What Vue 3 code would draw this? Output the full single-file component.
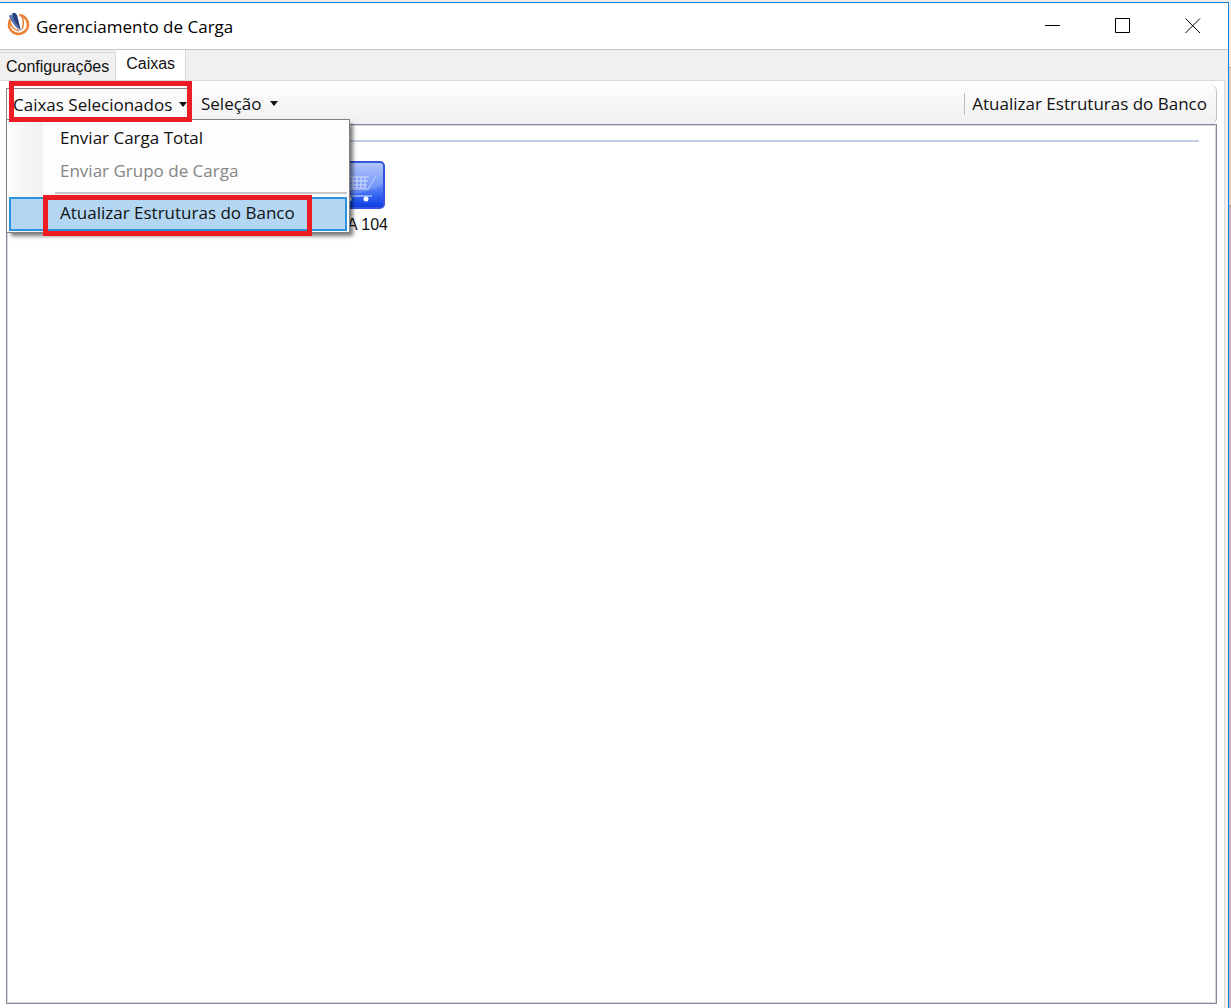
<script setup>
import { ref } from 'vue'

const tabs = ['Configurações', 'Caixas']
const activeTab = ref('Caixas')
const menuItems = [
  { label: 'Enviar Carga Total' },
  { label: 'Enviar Grupo de Carga', disabled: true },
  { separator: true },
  { label: 'Atualizar Estruturas do Banco', active: true, marked: true },
]
</script>

<template>
  <div class="desktop">
    <main class="window">
      <header class="titlebar">
        <svg class="logo" width="24" height="26" viewBox="0 0 24 26" aria-hidden="true">
          <circle cx="12.500" cy="13.500" r="9.500" fill="#fff" stroke="#ec8134" stroke-width="2.500" />
          <path d="M4 10Q5 18 13 20" fill="none" stroke="#ec8134" stroke-width="1.500" />
          <path d="M16 5Q19 13 15 20" fill="none" stroke="#ec8134" stroke-width="1.500" />
          <path d="M2 2H13L16 21Q6 15 2 2Z" fill="#fff" />
          <path d="M3 5Q6 13 14 20L6 4Q4 3 3 5Z" fill="#5871a8" />
          <path d="M6 3Q8 11 15 20L11 4Q8 0 6 3Z" fill="#263d7d" />
        </svg>
        <h1>Gerenciamento de Carga</h1>
        <div class="controls">
          <button aria-label="Minimizar"><svg width="16" height="16"><path d="M0 7.500H15" /></svg></button>
          <button aria-label="Maximizar"><svg width="16" height="16"><path d="M.5.5H14.500V14.500H.5Z" /></svg></button>
          <button aria-label="Fechar"><svg width="16" height="16"><path d="M.5.5L15 15M15 .5L.5 15" /></svg></button>
        </div>
      </header>

      <nav class="tabs" role="tablist">
        <button
          v-for="tab in tabs"
          :key="tab"
          role="tab"
          :aria-selected="activeTab === tab"
          :class="{ selected: activeTab === tab }"
          @click="activeTab = tab"
        >{{ tab }}</button>
      </nav>

      <section class="panel">
        <div class="toolbar">
          <div class="dropdown">
            <button class="tool open" aria-haspopup="menu" aria-expanded="true">Caixas Selecionados<i class="arrow"></i></button>
            <span class="mark mark-tool"></span>
            <div class="menu" role="menu">
              <template v-for="(item, index) in menuItems" :key="index">
                <hr v-if="item.separator" />
                <button
                  v-else
                  role="menuitem"
                  :disabled="item.disabled"
                  :class="{ active: item.active }"
                >{{ item.label }}<span v-if="item.marked" class="mark mark-item"></span></button>
              </template>
            </div>
          </div>
          <button class="tool">Seleção<i class="arrow"></i></button>
          <button class="tool update">Atualizar Estruturas do Banco</button>
        </div>

        <div class="list">
          <div class="group-line"></div>
          <figure class="register">
            <svg width="48" height="48" viewBox="0 0 48 48" aria-hidden="true">
              <defs>
                <linearGradient id="tile" x2="0" y2="1">
                  <stop offset="0" stop-color="#a9bdfb" />
                  <stop offset=".55" stop-color="#5b84f5" />
                  <stop offset=".75" stop-color="#2f60f1" />
                  <stop offset="1" stop-color="#0c3be4" />
                </linearGradient>
              </defs>
              <rect x="1" y="1" width="46" height="46" rx="4" fill="url(#tile)" stroke="#3455dc" stroke-width="2" />
              <path d="M2 34Q30 34 46 23V5Q46 2 43 2H2Z" fill="#fff" opacity=".14" />
              <path d="M6 16H32M7 20H31M8 24H30M9 27H29M12 16V27M16 16V27M20 16V27M24 16V27M28 16V27" fill="none" stroke="#d3deff" stroke-width="1" />
              <path d="M39 15L31 28H11M10 35H35" fill="none" stroke="#a9beff" stroke-width="1.500" />
              <circle cx="29" cy="38" r="2.500" fill="#fff" />
              <circle cx="12" cy="38" r="2.500" fill="#fff" />
            </svg>
            <figcaption>CAIXA 104</figcaption>
          </figure>
        </div>
      </section>
    </main>
  </div>
</template>

<style>
body {
  margin: 0;
}
</style>

<style scoped>
* {
  box-sizing: border-box;
}
.desktop {
  height: 100vh;
  padding: 2px 2px 0 0;
  display: flex;
  overflow: hidden;
  background: linear-gradient(#ececec 0 67px, #aaa 67px 68px, #d2d2d2 68px 205px, #a5a5b4 205px 207px, #b7b7c6 207px);
  color: #111;
  font-family: "Open Sans", "Noto Sans", sans-serif;
}
button {
  margin: 0;
  padding: 0;
  border: 0;
  background: none;
  color: inherit;
  font: inherit;
  white-space: nowrap;
}
.window {
  flex: 1;
  min-width: 0;
  display: flex;
  flex-direction: column;
  border-top: 1px solid #1883d7;
  border-right: 1px solid #1883d7;
  background: #f0f0f0;
}
.titlebar {
  display: flex;
  align-items: center;
  height: 47px;
  padding-left: 6px;
  border-bottom: 1px solid #c6c6c6;
  background: #fff;
}
.logo {
  margin-bottom: 4px;
}
h1 {
  margin: 0 0 0 6px;
  font-size: 17px;
  font-weight: 400;
  color: #000;
}
.controls {
  display: flex;
  margin-left: auto;
  height: 100%;
}
.controls button {
  width: 70px;
  display: flex;
  align-items: center;
  justify-content: center;
}
.controls svg {
  fill: none;
  stroke: #000;
}
.tabs {
  display: flex;
  align-items: flex-end;
  height: 30px;
  font-family: "Liberation Sans", Arial, sans-serif;
  font-size: 16px;
}
.tabs button {
  height: 28px;
  padding: 0 6px;
  border: solid #d9d9d9;
  border-width: 1px 1px 0 0;
}
.tabs .selected {
  height: 30px;
  padding: 0 10px 2px;
  border-top: 0;
  background: #fff;
}
.panel {
  flex: 1;
  display: flex;
  flex-direction: column;
  margin-right: 3px;
  padding: 5px 7px 4px 6px;
  border-right: 1px solid #dcdcdc;
  background: #fff;
  box-shadow: inset 0 1px #dcdcdc;
}
.toolbar {
  display: flex;
  align-items: center;
  height: 39px;
  padding-bottom: 2px;
  border-radius: 0 6px 6px 0;
  background: linear-gradient(#fdfdfd, #f0f0f0);
  font-size: 17px;
  border-right: 1px solid #c4c4c4;
}
.tool {
  display: flex;
  align-items: center;
  height: 31px;
  padding: 0 9px;
}
.dropdown {
  position: relative;
}
.open {
  width: 186px;
  padding: 0 4px 0 6px;
  border: 1px solid #85868a;
  border-bottom: 0;
  background: #fafafa;
}
.arrow {
  margin-left: 8px;
  border: solid transparent;
  border-width: 5px 4px 0;
  border-top-color: #111;
}
.open .arrow {
  margin-left: auto;
}
.update {
  position: relative;
  margin-left: auto;
}
.update::before {
  content: "";
  position: absolute;
  left: 1px;
  top: 5px;
  height: 22px;
  border-left: 1px solid #bdbdbd;
}
.menu {
  position: absolute;
  z-index: 2;
  top: 100%;
  left: 0;
  width: 344px;
  padding: 1px 2px;
  border: 1px solid #808080;
  background: linear-gradient(90deg, #fcfcfc, #f1f1f1 36px, #fdfdfd 36px);
  box-shadow: 4px 4px 4px -1px #0008;
}
.menu button {
  position: relative;
  display: block;
  width: 100%;
  height: 33px;
  padding-left: 51px;
  text-align: left;
}
.menu button:disabled {
  color: #858585;
}
.menu .active {
  height: 34px;
  padding: 0 0 3px 49px;
  border: 2px solid #2d91dc;
  background: #b3d7f3;
}
hr {
  height: 2px;
  margin: 5px 0 3px 46px;
  border: 0;
  background: #c6c6c6;
}
.mark {
  position: absolute;
  z-index: 3;
  border: 5px solid #ed1c24;
  pointer-events: none;
}
.mark-tool {
  inset: -7px 0 -3px 3px;
}
.mark-item {
  inset: -4px 33px -7px 32px;
}
.list {
  flex: 1;
  padding: 15px 17px;
  border: 1px solid #82879a;
  background: #fff;
  box-shadow: inset 0 0 0 1px #d5d8dd;
}
.group-line {
  height: 2px;
  background: #c1cde2;
}
.register {
  display: flex;
  flex-direction: column;
  align-items: flex-end;
  width: 120px;
  margin: 19px 0 0 244px;
}
.register svg {
  margin-right: 3px;
}
figcaption {
  margin-top: 5px;
  font: 16px/22px "Liberation Sans", Arial, sans-serif;
}
</style>
